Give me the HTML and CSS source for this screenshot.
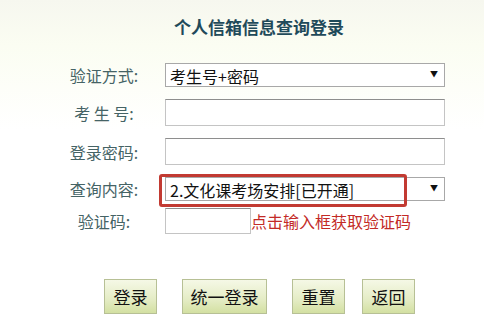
FILE: index.html
```
<!DOCTYPE html>
<html lang="zh-CN">
<head>
    <meta charset="UTF-8">
    <title>个人信箱信息查询登录</title>
    <link rel="stylesheet" href="styles.css">
</head>
<body>
    <h1 class="title">个人信箱信息查询登录</h1>

    <div class="login_form">
        <label class="lb" for="sel_way">验证方式:</label>
        <span class="sel_wrap">
            <select id="sel_way" class="sel">
                <option>考生号+密码</option>
            </select>
        </span>

        <label class="lb" for="inp_ksh">考 生 号:</label>
        <input type="text" id="inp_ksh" class="inp">

        <label class="lb" for="inp_pwd">登录密码:</label>
        <input type="password" id="inp_pwd" class="inp">

        <label class="lb" for="sel_content">查询内容:</label>
        <span class="sel_wrap">
            <select id="sel_content" class="sel">
                <option>2.文化课考场安排[已开通]</option>
            </select>
            <span class="mark"></span>
        </span>

        <label class="lb lb_code" for="inp_code">验证码:</label>
        <div class="code_row">
            <input type="text" id="inp_code" class="inp inp_code">
            <span class="code_tip">点击输入框获取验证码</span>
        </div>
    </div>

    <div class="btns">
        <button class="btn btn_login">登录</button>
        <button class="btn btn_wide">统一登录</button>
        <button class="btn btn_reset">重置</button>
        <button class="btn">返回</button>
    </div>
</body>
</html>
```

FILE: styles.css
```
* {
    margin: 0;
    padding: 0;
    box-sizing: border-box;
}

body {
    min-height: 333px;
    font-family: "Noto Sans CJK SC", "Liberation Sans", sans-serif;
    background: linear-gradient(#f6f7ef 0, #fbfdf2 45px, #ffffff 130px);
}

.title {
    padding-top: 16px;
    padding-left: 34px;
    text-align: center;
    font-size: 17px;
    line-height: 21px;
    font-weight: bold;
    color: #1f4a5a;
}

.login_form {
    margin-top: 26px;
    padding-left: 60px;

    display: grid;
    grid-template-columns: 88px 280px;
    column-gap: 17px;
    row-gap: 12px;
    align-items: center;
}

.lb {
    text-align: center;
    font-size: 16px;
    line-height: 20px;
    color: #456365;
    white-space: pre;
}

.sel_wrap {
    position: relative;
    display: block;
    height: 24px;
}

.sel_wrap::after {
    content: "▼";
    position: absolute;
    right: 7px;
    top: 6px;
    font-size: 8px;
    line-height: 10px;
    color: #111;
    pointer-events: none;
}

.sel {
    appearance: none;
    -webkit-appearance: none;
    width: 280px;
    height: 24px;
    padding-left: 4px;
    border: 1px solid #a8a8a8;
    border-radius: 0;
    background: #fff;
    font-family: inherit;
    font-size: 16px;
    color: #111;
}

.mark {
    position: absolute;
    left: -6px;
    top: -3px;
    width: 248px;
    height: 33px;
    border: 3px solid #c23a32;
    border-radius: 3px;
}

.inp {
    display: block;
    width: 280px;
    height: 27px;
    border: 1px solid #c4c4c4;
    border-top-color: #8e8e8e;
    background: #fff;
}

.lb_code {
    margin-top: -5px;
}

.code_row {
    margin-top: -5px;
    display: flex;
    align-items: center;
}

.inp_code {
    width: 86px;
    height: 26px;
}

.code_tip {
    font-size: 16px;
    line-height: 20px;
    color: #c32a26;
}

.btns {
    margin-top: 45px;
    padding-left: 104px;
    display: flex;
}

.btn {
    width: 53px;
    height: 35px;
    border: 1px solid #b7c095;
    background: linear-gradient(#f5f8e6, #e4ecc4 60%, #d3e0a2);
    font-family: inherit;
    font-size: 17px;
    color: #111;
}

.btn_login,
.btn_wide {
    margin-right: 25px;
}

.btn_wide {
    width: 85px;
}

.btn_reset {
    margin-right: 17px;
}
```
